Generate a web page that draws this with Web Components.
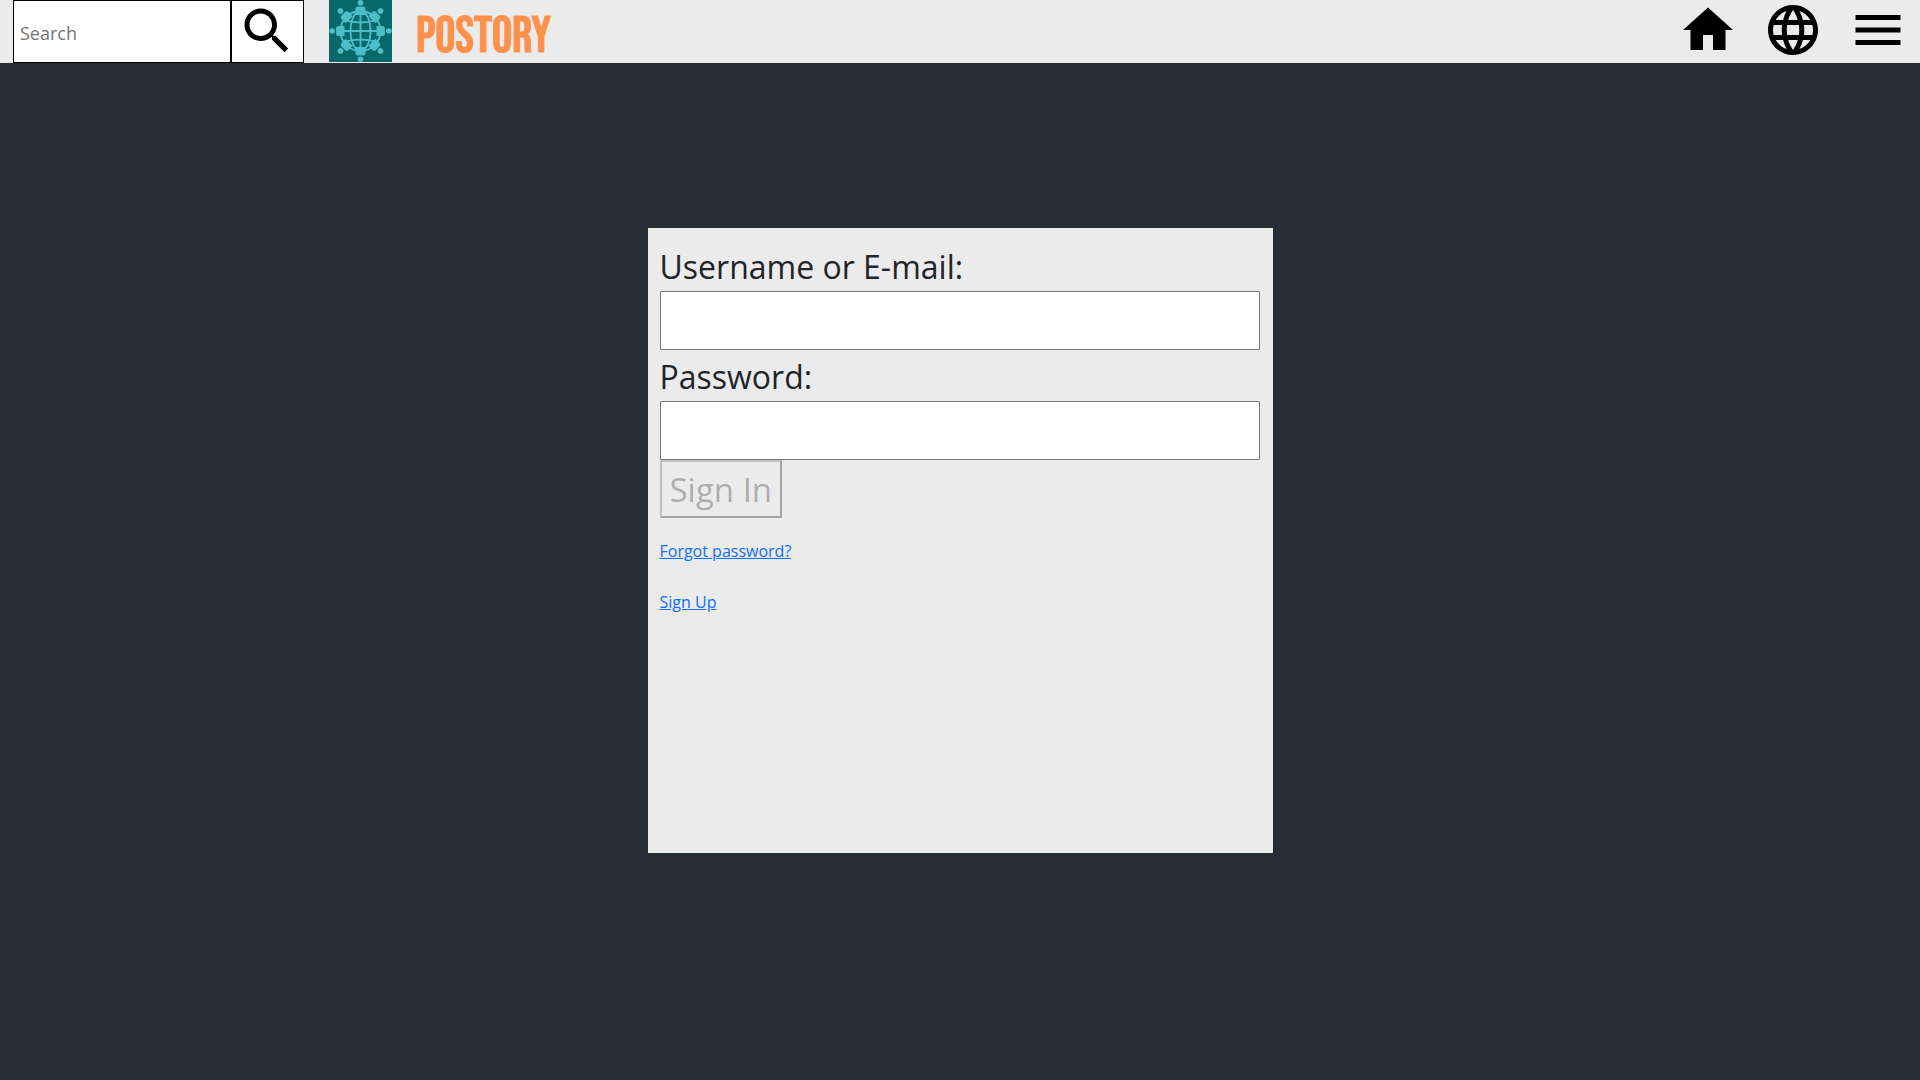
<!DOCTYPE html>
<html lang="en">
<head>
<meta charset="utf-8">
<title>Postory</title>
<style>
  html, body { height: 100%; }
  body {
    margin: 0;
    background: #282c34;
    color: #212529;
    font-family: "Segoe UI", "Open Sans", "Noto Sans", sans-serif;
  }
</style>
</head>
<body>
<postory-app></postory-app>

<template id="app-template">
  <style>
    :host { display: grid; grid-template-rows: auto 1fr; min-height: 100vh; }
    main { display: flex; justify-content: center; padding-top: 165px; }
  </style>
  <top-bar></top-bar>
  <main>
    <sign-in-card></sign-in-card>
  </main>
</template>

<template id="bar-template">
  <style>
    :host { display: flex; height: 63px; background: #ebebeb; padding: 0 12px 0 13px; }
    .brand { display: flex; gap: 24px; margin-left: 25px; text-decoration: none; color: #ff914d; }
    .name { padding-top: 12px; font: 400 50px/51px "Bebas Neue", "Roboto", sans-serif; -webkit-text-stroke: 1px currentColor; }
    nav { display: flex; gap: 25px; margin-left: auto; }
  </style>
  <search-box></search-box>
  <a class="brand" href="#home" aria-label="POSTORY">
    <brand-logo></brand-logo>
    <span class="name">POSTORY</span>
  </a>
  <nav>
    <nav-icon label="Home"><svg viewBox="0 0 24 24"><path d="M10 20v-6h4v6h5v-8h3L12 3 2 12h3v8z"/></svg></nav-icon>
    <nav-icon label="Language"><svg viewBox="0 0 24 24"><path d="M11.99 2C6.47 2 2 6.48 2 12s4.47 10 9.99 10C17.52 22 22 17.52 22 12S17.52 2 11.99 2zm6.93 6h-2.95c-.32-1.25-.78-2.45-1.38-3.56 1.84.63 3.37 1.91 4.33 3.56zM12 4.04c.83 1.2 1.48 2.53 1.91 3.96h-3.82c.43-1.43 1.08-2.76 1.91-3.96zM4.26 14C4.1 13.36 4 12.69 4 12s.1-1.36.26-2h3.38c-.08.66-.14 1.32-.14 2s.06 1.34.14 2H4.26zm.82 2h2.95c.32 1.25.78 2.45 1.38 3.56-1.84-.63-3.37-1.9-4.33-3.56zm2.95-8H5.08c.96-1.66 2.49-2.93 4.33-3.56C8.81 5.55 8.35 6.75 8.03 8zM12 19.96c-.83-1.2-1.48-2.53-1.91-3.96h3.82c-.43 1.43-1.08 2.76-1.91 3.96zM14.34 14H9.66c-.09-.66-.16-1.32-.16-2s.07-1.35.16-2h4.68c.09.65.16 1.32.16 2s-.07 1.34-.16 2zm.25 5.56c.6-1.11 1.06-2.31 1.38-3.56h2.95c-.96 1.65-2.49 2.93-4.33 3.56zM16.36 14c.08-.66.14-1.32.14-2s-.06-1.34-.14-2h3.38c.16.64.26 1.31.26 2s-.1 1.36-.26 2h-3.38z"/></svg></nav-icon>
    <nav-icon label="Menu"><svg viewBox="0 0 24 24"><path d="M3 18h18v-2H3v2zm0-5h18v-2H3v2zm0-7v2h18V6H3z"/></svg></nav-icon>
  </nav>
</template>

<template id="search-template">
  <style>
    :host { display: block; }
    form { display: flex; height: 100%; }
    input, button {
      box-sizing: border-box; margin: 0; border: 1px solid #000; border-radius: 0;
      background: #fff; font: inherit;
    }
    input { width: 218px; padding: 3px 6px 0; font-size: 18px; }
    input::placeholder { color: #757575; }
    button { width: 73px; padding: 0 5px 2px; cursor: pointer; }
    svg { display: block; width: 60px; height: 60px; }
  </style>
  <form role="search">
    <input type="text" placeholder="Search" aria-label="Search">
    <button type="button" aria-label="Submit search">
      <svg viewBox="0 0 24 24"><path d="M15.5 14h-.79l-.28-.27C15.41 12.59 16 11.11 16 9.5 16 5.91 13.09 3 9.5 3S3 5.91 3 9.5 5.91 16 9.5 16c1.61 0 3.09-.59 4.23-1.57l.27.28v.79l5 4.99L20.49 19l-4.99-5zm-6 0C7.01 14 5 11.99 5 9.5S7.01 5 9.5 5 14 7.01 14 9.5 11.99 14 9.5 14z"/></svg>
    </button>
  </form>
</template>

<template id="logo-template">
  <style>
    :host { display: block; }
    svg { display: block; width: 63px; height: 62px; background: #08696d; }
  </style>
  <svg viewBox="0 0 63 62" fill="none" stroke="#4fbdc7">
    <defs>
      <g id="person" fill="#4fbdc7" stroke="none">
        <circle cx="31.5" cy="2.7" r="2.8"/>
        <path d="M26.500 15V9.2q0-2.6 2.6-2.6h4.8q2.6 0 2.6 2.6V15z"/>
      </g>
    </defs>
    <g stroke-width="1.8">
      <circle cx="31.5" cy="31" r="20"/>
      <ellipse cx="31.5" cy="31" rx="10" ry="20"/>
      <path d="M31.5 11v40M11.500 31h40M15 20q16.500 5 33 0M15 42q16.500-5 33 0"/>
    </g>
    <use href="#person"/>
    <use href="#person" transform="rotate(45 31.500 31)"/>
    <use href="#person" transform="rotate(90 31.500 31)"/>
    <use href="#person" transform="rotate(135 31.500 31)"/>
    <use href="#person" transform="rotate(180 31.500 31)"/>
    <use href="#person" transform="rotate(225 31.500 31)"/>
    <use href="#person" transform="rotate(270 31.500 31)"/>
    <use href="#person" transform="rotate(315 31.500 31)"/>
  </svg>
</template>

<template id="icon-template">
  <style>
    :host { display: block; }
    button { display: block; padding: 0; border: 0; background: none; color: #000; cursor: pointer; }
    ::slotted(svg) { display: block; width: 60px; height: 60px; }
  </style>
  <button type="button"><slot></slot></button>
</template>

<template id="card-template">
  <style>
    :host {
      display: block; box-sizing: border-box; width: 625px; max-width: 100%;
      height: 625px; padding: 12px 13px 12px 12px; background: #ebebeb;
    }
    form { display: flex; flex-direction: column; align-items: flex-start; }
    text-field { align-self: stretch; }
    button {
      height: 58px; padding: 2px 8px 0; border: 2px outset rgba(16, 16, 16, 0.3);
      background: none; color: rgba(16, 16, 16, 0.3);
      font: inherit; font-size: 33px; line-height: 52px;
    }
    .links { display: flex; flex-direction: column; align-items: flex-start; gap: 25px; padding-top: 20px; }
    a { color: #0d6efd; font-size: 16px; line-height: 26px; }
  </style>
  <form>
    <text-field label="Username or E-mail:" type="text"></text-field>
    <text-field label="Password:" type="password"></text-field>
    <button type="submit" disabled>Sign In</button>
    <div class="links">
      <a href="#forgot">Forgot password?</a>
      <a href="#signup">Sign Up</a>
    </div>
  </form>
</template>

<template id="field-template">
  <style>
    :host { display: block; }
    label { display: block; padding-top: 2px; font-size: 32px; line-height: 49px; }
    input {
      display: block; box-sizing: border-box; width: 100%; height: 59px; margin: 0;
      padding: 1px 2px; border: 1px solid #767676; border-radius: 1px; background: #fff;
      font: inherit; font-size: 32px;
    }
  </style>
  <label for="field"></label>
  <input id="field">
</template>

<script>
  class TemplateElement extends HTMLElement {
    constructor() {
      super();
      const template = document.getElementById(this.constructor.template);
      this.attachShadow({ mode: "open" }).append(template.content.cloneNode(true));
    }
  }

  class BrandLogo extends TemplateElement { static template = "logo-template"; }
  class SearchBox extends TemplateElement { static template = "search-template"; }

  class NavIcon extends TemplateElement {
    static template = "icon-template";
    connectedCallback() {
      this.shadowRoot.querySelector("button").setAttribute("aria-label", this.getAttribute("label"));
    }
  }

  class TextField extends TemplateElement {
    static template = "field-template";
    connectedCallback() {
      this.shadowRoot.querySelector("label").textContent = this.getAttribute("label");
      this.shadowRoot.querySelector("input").type = this.getAttribute("type");
    }
  }

  class TopBar extends TemplateElement { static template = "bar-template"; }
  class SignInCard extends TemplateElement { static template = "card-template"; }
  class PostoryApp extends TemplateElement { static template = "app-template"; }

  customElements.define("brand-logo", BrandLogo);
  customElements.define("search-box", SearchBox);
  customElements.define("nav-icon", NavIcon);
  customElements.define("text-field", TextField);
  customElements.define("top-bar", TopBar);
  customElements.define("sign-in-card", SignInCard);
  customElements.define("postory-app", PostoryApp);
</script>
</body>
</html>
